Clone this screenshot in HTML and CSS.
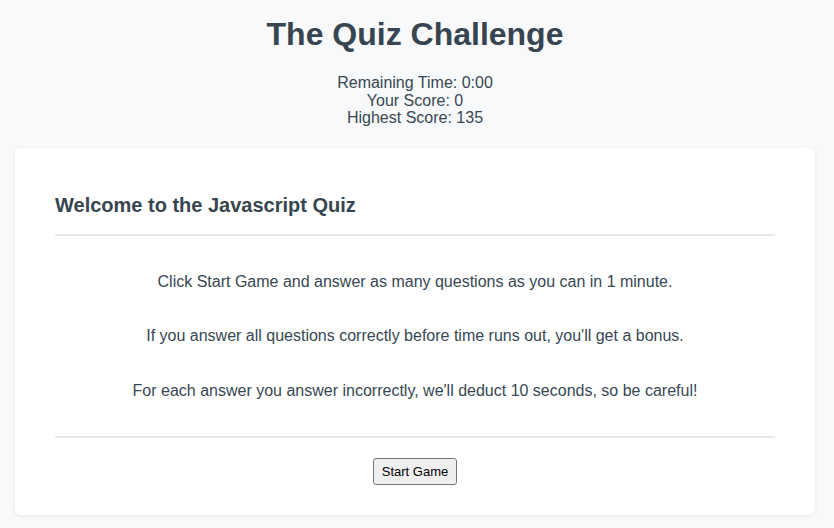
FILE: index.html
```html
<!DOCTYPE html>
<html lang="en">
<head>
<meta charset="utf-8">
<title>The Quiz Challenge</title>
<link rel="stylesheet" href="styles.css">
</head>
<body>
  <div class="page">
    <header class="header">
      <h1 class="title">The Quiz Challenge</h1>
      <div class="stats">
        <div>Remaining Time: 0:00</div>
        <div>Your Score: 0</div>
        <div>Highest Score: 135</div>
      </div>
    </header>
    <main class="card">
      <h2 class="card-title">Welcome to the Javascript Quiz</h2>
      <hr class="divider">
      <div class="intro">
        <p>Click Start Game and answer as many questions as you can in 1 minute.</p>
        <p>If you answer all questions correctly before time runs out, you'll get a bonus.</p>
        <p>For each answer you answer incorrectly, we'll deduct 10 seconds, so be careful!</p>
      </div>
      <hr class="divider">
      <div class="actions">
        <button class="start-btn" type="button">Start Game</button>
      </div>
    </main>
  </div>
</body>
</html>
```
FILE: styles.css
```css
html, body {
  margin: 0;
  padding: 0;
}
body {
  background: #f8f9fb;
  color: #374753;
  font-family: "Liberation Sans", Arial, Helvetica, sans-serif;
}
.page {
  margin: 0 19px 0 15px;
  padding: 16px 0 12px;
}
.header {
  text-align: center;
}
.title {
  margin: 0;
  font-size: 32px;
  line-height: 37px;
  font-weight: bold;
  color: #36454f;
}
.stats {
  margin-top: 21px;
  font-size: 16px;
  line-height: 17.5px;
}
.card {
  margin-top: 21px;
  background: #ffffff;
  border-radius: 6px;
  box-shadow: 0 1px 4px rgba(0, 0, 0, 0.08);
  padding: 46px 40px 30px;
}
.card-title {
  margin: 0;
  font-size: 20px;
  line-height: 23px;
  font-weight: bold;
  color: #36454f;
}
.divider {
  margin: 0;
  border: 0;
  border-top: 2px solid #e6e6e6;
}
.card-title + .divider {
  margin-top: 17px;
}
.intro {
  padding: 37px 0 36px;
  text-align: center;
  font-size: 16px;
  line-height: 18.5px;
  display: flex;
  flex-direction: column;
  gap: 36px;
}
.intro p {
  margin: 0;
}
.actions {
  display: flex;
  justify-content: center;
  padding-top: 20px;
}
.start-btn {
  font-family: "Liberation Sans", Arial, sans-serif;
  font-size: 13px;
  line-height: 15px;
  padding: 5px 8px;
  color: #000;
  background: #efefef;
  border: 1px solid #767676;
  border-radius: 3px;
}
```
